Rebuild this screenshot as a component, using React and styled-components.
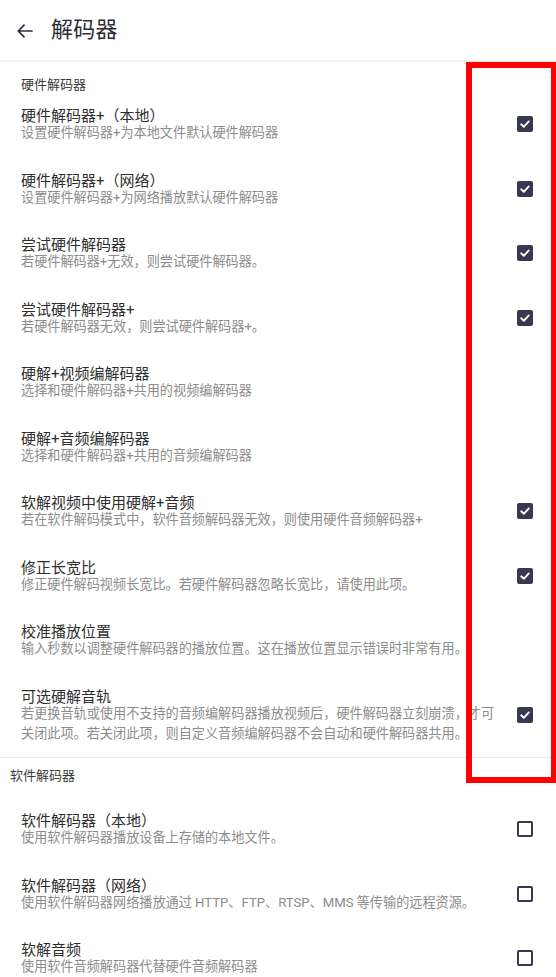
import React from "react";
import styled, { createGlobalStyle } from "styled-components";

const Global = createGlobalStyle`
  html, body { margin: 0; padding: 0; background: #ffffff; }
  body {
    font-family: Roboto, "Noto Sans CJK SC", "Noto Sans", sans-serif;
    -webkit-font-smoothing: antialiased;
  }
  * { box-sizing: border-box; }
`;

const Page = styled.div`
  position: relative;
  width: 556px;
  min-height: 977px;
  background: #fff;
  overflow: hidden;
`;

const Header = styled.header`
  display: flex;
  align-items: center;
  height: 62px;
  padding-left: 16px;
  gap: 17px;
  border-bottom: 2px solid #f2f2f2;
`;

const BackButton = styled.button`
  display: flex;
  align-items: center;
  justify-content: center;
  width: 18px;
  height: 18px;
  padding: 0;
  margin-top: 1px;
  border: none;
  background: none;
  color: #2c2c3a;
`;

const HeaderTitle = styled.h1`
  margin: 0;
  font-size: 22px;
  line-height: 1;
  font-weight: 400;
  color: #2c2c36;
  letter-spacing: 0.3px;
`;

const SectionHeader = styled.div`
  font-size: 13px;
  color: #3a3a3a;
  line-height: ${(p) => p.$lh}px;
  padding: ${(p) => p.$pt}px 0 ${(p) => p.$pb}px ${(p) => p.$left}px;
`;

const Divider = styled.div`
  height: 1px;
  background: #e8e8e8;
`;

const Row = styled.div`
  display: flex;
  align-items: center;
  padding: 0 23px 0 21px;
`;

const TextCol = styled.div`
  flex: 1;
  max-width: 479px;
  padding: 15px 0 13.5px;
`;

const Title = styled.div`
  font-size: 15px;
  line-height: 18px;
  color: #2e2e2e;
`;

const Sub = styled.div`
  font-size: 13.15px;
  line-height: 20px;
  margin-top: -2px;
  color: #8c8c8c;
`;

const Check = styled.div`
  margin-left: auto;
  flex: none;
  width: 16px;
  height: 16px;
  border-radius: 2px;
  display: flex;
  align-items: center;
  justify-content: center;
  background: ${(p) => (p.$on ? "#383850" : "transparent")};
  border: ${(p) => (p.$on ? "none" : "2px solid #383850")};
`;

const Highlight = styled.div`
  position: absolute;
  left: 466px;
  top: 62px;
  width: 91px;
  height: 721px;
  border: 6px solid #ff0000;
  pointer-events: none;
`;

const hardware = [
  ["硬件解码器+（本地）", "设置硬件解码器+为本地文件默认硬件解码器", true],
  ["硬件解码器+（网络）", "设置硬件解码器+为网络播放默认硬件解码器", true],
  ["尝试硬件解码器", "若硬件解码器+无效，则尝试硬件解码器。", true],
  ["尝试硬件解码器+", "若硬件解码器无效，则尝试硬件解码器+。", true],
  ["硬解+视频编解码器", "选择和硬件解码器+共用的视频编解码器", null],
  ["硬解+音频编解码器", "选择和硬件解码器+共用的音频编解码器", null],
  ["软解视频中使用硬解+音频", "若在软件解码模式中，软件音频解码器无效，则使用硬件音频解码器+", true],
  ["修正长宽比", "修正硬件解码视频长宽比。若硬件解码器忽略长宽比，请使用此项。", true],
  ["校准播放位置", "输入秒数以调整硬件解码器的播放位置。这在播放位置显示错误时非常有用。", null],
  [
    "可选硬解音轨",
    "若更换音轨或使用不支持的音频编解码器播放视频后，硬件解码器立刻崩溃，才可关闭此项。若关闭此项，则自定义音频编解码器不会自动和硬件解码器共用。",
    true,
  ],
];

const software = [
  ["软件解码器（本地）", "使用软件解码器播放设备上存储的本地文件。", false],
  ["软件解码器（网络）", "使用软件解码器网络播放通过 HTTP、FTP、RTSP、MMS 等传输的远程资源。", false],
  ["软解音频", "使用软件音频解码器代替硬件音频解码器", false],
];

function CheckBox({ on }) {
  return (
    <Check $on={on}>
      {on && (
        <svg width="12" height="12" viewBox="0 0 12 12">
          <polyline
            points="2.2,6.3 4.8,8.8 9.8,3.4"
            fill="none"
            stroke="#ffffff"
            strokeWidth="1.9"
            strokeLinecap="round"
            strokeLinejoin="round"
          />
        </svg>
      )}
    </Check>
  );
}

function Item({ title, sub, check }) {
  return (
    <Row>
      <TextCol>
        <Title>{title}</Title>
        <Sub>{sub}</Sub>
      </TextCol>
      {check !== null && <CheckBox on={check} />}
    </Row>
  );
}

export default function App() {
  return (
    <>
      <Global />
      <Page>
        <Header>
          <BackButton aria-label="back">
            <svg width="16" height="14" viewBox="0 0 16 14">
              <path
                d="M15 7H1.5M7 1.2L1.3 7L7 12.8"
                fill="none"
                stroke="currentColor"
                strokeWidth="1.7"
                strokeLinecap="round"
                strokeLinejoin="round"
              />
            </svg>
          </BackButton>
          <HeaderTitle>解码器</HeaderTitle>
        </Header>
        <SectionHeader $pt={15} $pb={0} $lh={15} $left={21}>
          硬件解码器
        </SectionHeader>
        {hardware.map(([t, s, c]) => (
          <Item key={t} title={t} sub={s} check={c} />
        ))}
        <Divider />
        <SectionHeader $pt={10} $pb={13} $lh={16} $left={10}>
          软件解码器
        </SectionHeader>
        {software.map(([t, s, c]) => (
          <Item key={t} title={t} sub={s} check={c} />
        ))}
        <Highlight />
      </Page>
    </>
  );
}
